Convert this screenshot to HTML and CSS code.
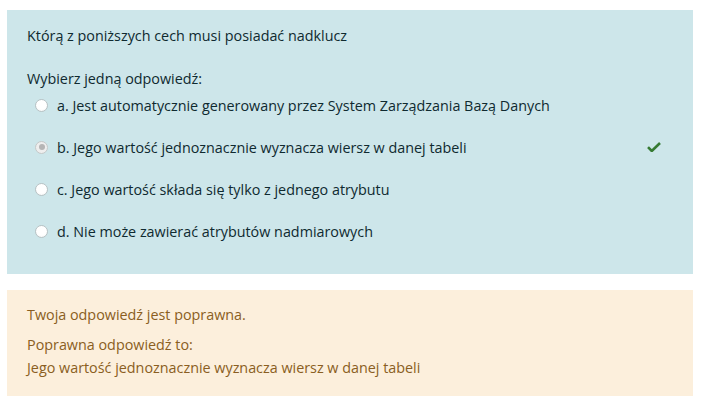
FILE: index.html
```html
<!DOCTYPE html>
<html lang="pl">
<head>
<meta charset="utf-8">
<link rel="stylesheet" href="styles.css">
</head>
<body>
<div class="page">
  <div class="formulation">
    <div class="qtext">Którą z poniższych cech musi posiadać nadklucz</div>
    <div class="prompt">Wybierz jedną odpowiedź:</div>
    <div class="answers">
      <div class="option"><span class="radio"></span><span class="label">a. Jest automatycznie generowany przez System Zarządzania Bazą Danych</span></div>
      <div class="option"><span class="radio checked"></span><span class="label">b. Jego wartość jednoznacznie wyznacza wiersz w danej tabeli</span>
        <svg class="check" width="14" height="10" viewBox="0 0 14 10"><path d="M1 5.2 L4.8 9 L13 1" fill="none" stroke="#357a32" stroke-width="2.6" stroke-linejoin="miter"/></svg>
      </div>
      <div class="option"><span class="radio"></span><span class="label">c. Jego wartość składa się tylko z jednego atrybutu</span></div>
      <div class="option"><span class="radio"></span><span class="label">d. Nie może zawierać atrybutów nadmiarowych</span></div>
    </div>
  </div>
  <div class="outcome">
    <div class="feedback">Twoja odpowiedź jest poprawna.</div>
    <div class="right">Poprawna odpowiedź to:<br>Jego wartość jednoznacznie wyznacza wiersz w danej tabeli</div>
  </div>
</div>
</body>
</html>
```
FILE: styles.css
```css
html, body {
  margin: 0;
  padding: 0;
  background: #ffffff;
}
body {
  font-family: "Open Sans", "Noto Sans", sans-serif;
  font-size: 14.35px;
  line-height: 21px;
}
.page {
  padding: 10px 11px 0 7px;
  display: flex;
  flex-direction: column;
  gap: 16px;
}
.formulation {
  background: #cde6ea;
  color: #0f2a30;
  padding: 15px 20px 11.5px 20px;
}
.qtext {
  margin-bottom: 21.5px;
}
.prompt {
  margin-bottom: 6px;
}
.answers {
  display: flex;
  flex-direction: column;
}
.option {
  display: flex;
  align-items: center;
  padding-left: 8px;
  margin-bottom: 21px;
}
.radio {
  width: 11px;
  height: 11px;
  border-radius: 50%;
  border: 1px solid #b8c2c4;
  background: radial-gradient(circle at 50% 40%, #ffffff 0%, #ffffff 55%, #eef0f0 100%);
  margin-right: 9px;
  box-sizing: content-box;
  position: relative;
  flex: none;
}
.radio.checked {
  background: #eeeeee;
  border-color: #c4c8c8;
}
.radio.checked::after {
  content: "";
  position: absolute;
  left: 2.5px;
  top: 2.5px;
  width: 6px;
  height: 6px;
  border-radius: 50%;
  background: #b5b5b5;
}
.label {
  flex: 1;
}
.check {
  margin-right: 12px;
  flex: none;
}
.outcome {
  background: #fcefdc;
  color: #8a5e22;
  padding: 12.5px 20px 17.5px 20px;
  line-height: 23px;
}
.feedback {
  margin-bottom: 7px;
}
```
